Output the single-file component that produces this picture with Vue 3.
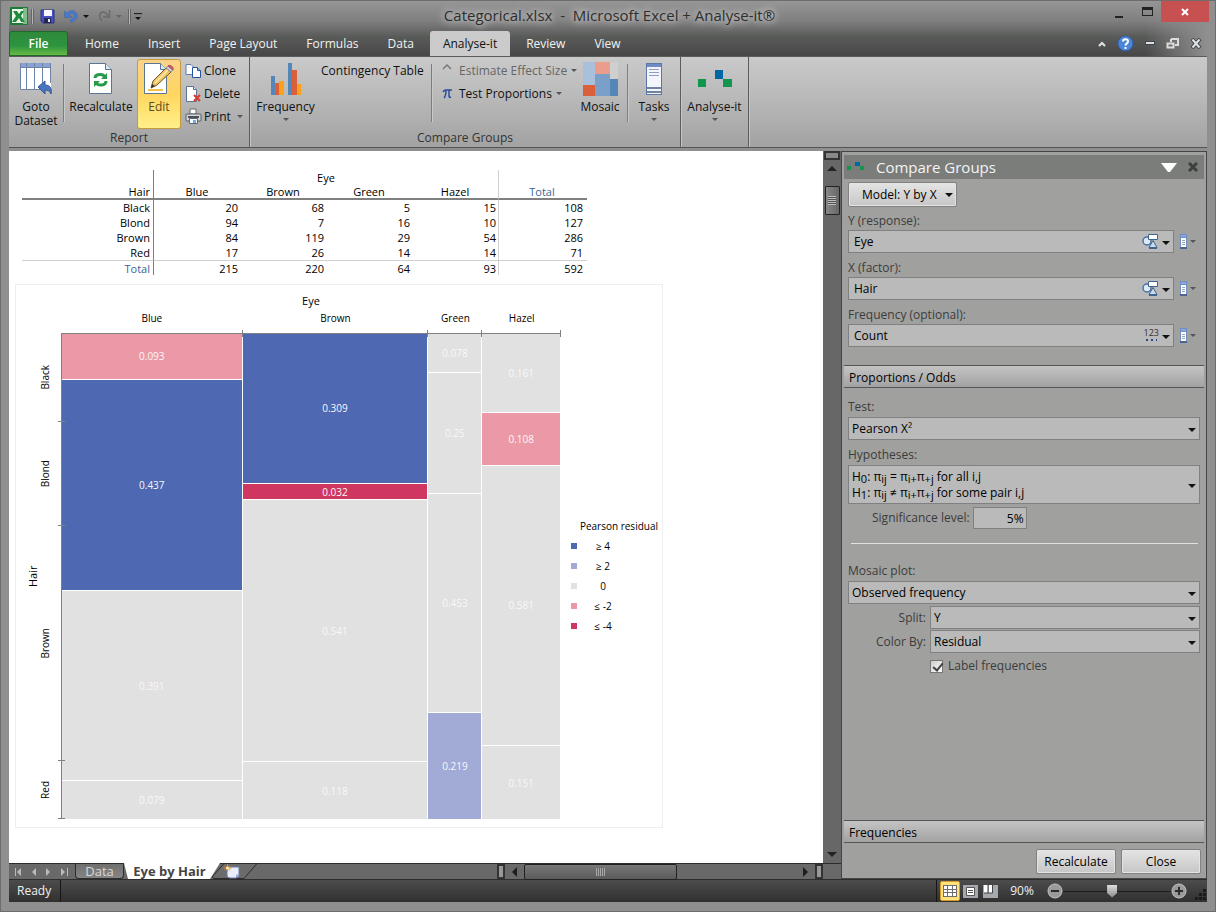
<script setup>
import { ref } from 'vue'

const tabs = ['Home', 'Insert', 'Page Layout', 'Formulas', 'Data', 'Analyse-it', 'Review', 'View']
const activeTab = ref('Analyse-it')

const eyes = ['Blue', 'Brown', 'Green', 'Hazel']
const eyeTotals = [215, 220, 64, 93]
const rows = [
  { hair: 'Black', counts: [20, 68, 5, 15], total: 108 },
  { hair: 'Blond', counts: [94, 7, 16, 10], total: 127 },
  { hair: 'Brown', counts: [84, 119, 29, 54], total: 286 },
  { hair: 'Red', counts: [17, 26, 14, 14], total: 71 },
]

const mosaic = [
  { eye: 'Blue', total: 215, cells: [['0.093', 'neg2'], ['0.437', 'pos4'], ['0.391', 'zero'], ['0.079', 'zero']] },
  { eye: 'Brown', total: 220, cells: [['0.309', 'pos4'], ['0.032', 'neg4'], ['0.541', 'zero'], ['0.118', 'zero']] },
  { eye: 'Green', total: 64, cells: [['0.078', 'zero'], ['0.25', 'zero'], ['0.453', 'zero'], ['0.219', 'pos2']] },
  { eye: 'Hazel', total: 93, cells: [['0.161', 'zero'], ['0.108', 'neg2'], ['0.581', 'zero'], ['0.151', 'zero']] },
]

const legend = [
  ['pos4', '≥ 4'],
  ['pos2', '≥ 2'],
  ['zero', '0'],
  ['neg2', '≤ -2'],
  ['neg4', '≤ -4'],
]

const variables = [
  { id: 'response', label: 'Y (response):', value: 'Eye', kind: 'category' },
  { id: 'factor', label: 'X (factor):', value: 'Hair', kind: 'category' },
  { id: 'frequency', label: 'Frequency (optional):', value: 'Count', kind: 'number' },
]

const significance = ref('5%')
const labelFrequencies = ref(true)
const zoom = ref(45)
</script>

<template>
  <div class="window">
    <header class="top">
      <div class="titlebar">
        <div class="quick">
          <svg class="app-icon" width="18" height="18" viewBox="0 0 18 18">
            <rect x="0" y="0" width="18" height="18" rx="1" fill="#1f7a38" />
            <path d="M2 2h12l2 2v12H2z" fill="#eef7ee" />
            <path d="M13 1h4v16h-4z" fill="#7fc08a" />
            <path d="M3 4h4l2 3 2-3h3l-3 5 4 6h-4l-2-4-3 4H2l4-6z" fill="#1f8a3c" />
          </svg>
          <span class="qsep"></span>
          <button aria-label="Save">
            <svg width="15" height="15" viewBox="0 0 15 15">
              <path d="M1 1h13v13H3l-2-2z" fill="#4a4fc0" stroke="#2c2f86" />
              <rect x="4" y="1" width="8" height="6" fill="#f4f6fb" />
              <rect x="4" y="9" width="7" height="5" fill="#23264f" />
              <rect x="8" y="10" width="2" height="3" fill="#e6e8f5" />
            </svg>
          </button>
          <button class="undo" aria-label="Undo">
            <svg width="14" height="14" viewBox="0 0 14 14">
              <path d="M0 2l1 7 7-1-2.500-2C7 3.500 10 4 10 6.500S8 10 6 11l1 2.500C11 12 14 9.500 13 5.500S7 0 3 4z" fill="#4a7bcb" stroke="#3560a8" stroke-width=".500" />
            </svg>
            <i class="caret"></i>
          </button>
          <button class="redo" aria-label="Redo">
            <svg width="14" height="14" viewBox="0 0 14 14">
              <path d="M12.500 1v7H6M11 7C9 2 4 2 3 5s0 5 2 7" fill="none" stroke="#6a6a6a" stroke-width="1.500" />
            </svg>
            <i class="caret dim"></i>
          </button>
          <span class="qsep"></span>
          <button class="custom" aria-label="Customize toolbar"><span></span><i class="caret"></i></button>
        </div>
        <h1>Categorical.xlsx &nbsp;-&nbsp; Microsoft Excel + Analyse-it®</h1>
        <div class="wincontrols">
          <button aria-label="Minimize"><svg width="8" height="14"><rect y="11" width="8" height="2" fill="#222" /></svg></button>
          <button aria-label="Maximize"><svg width="11" height="10"><path d="M0 0h11v9H0zM1 3v5h9V3z" fill="#222" fill-rule="evenodd" /></svg></button>
          <button class="close" aria-label="Close window"><svg width="8" height="8" viewBox="0 0 8 8"><path d="M1 1l6 6M7 1l-6 6" stroke="#fff" stroke-width="2" /></svg></button>
        </div>
      </div>
      <nav class="tabs">
        <button class="file">File</button>
        <button v-for="t in tabs" :key="t" :class="{ active: t === activeTab }" @click="activeTab = t">{{ t }}</button>
        <div class="doc-controls">
          <button aria-label="Collapse ribbon"><svg width="8" height="6"><path d="M1 5l3-3 3 3" fill="none" stroke="#e4e4e4" stroke-width="2" /></svg></button>
          <button aria-label="Help">
            <svg width="17" height="17" viewBox="0 0 17 17">
              <circle cx="8.500" cy="8.500" r="7.500" fill="#4d86d6" stroke="#2f5fae" />
              <path d="M6 6.500C6 3.500 11 3.500 11 6.500 11 8.500 8.500 8.500 8.500 10.500M8.500 12v2" fill="none" stroke="#fff" stroke-width="2" />
            </svg>
          </button>
          <button aria-label="Minimize workbook"><svg width="10" height="5"><rect x=".500" y=".500" width="9" height="3" fill="#e0e0e0" stroke="#3d4650" /></svg></button>
          <button aria-label="Restore workbook"><svg width="13" height="12" viewBox="0 0 13 12"><path d="M5 1h7v6H9M5 1v3" fill="none" stroke="#ddd" stroke-width="2" /><path d="M1.500 5.500h6v4h-6z" fill="none" stroke="#ddd" stroke-width="2" /></svg></button>
          <button aria-label="Close workbook"><svg width="12" height="11" viewBox="0 0 12 11"><path d="M2 1l8 9M10 1L2 10" stroke="#39424c" stroke-width="4" /><path d="M2.500 1.500l7 8M9.500 1.500l-7 8" stroke="#e4e4e4" stroke-width="2" /></svg></button>
        </div>
      </nav>
    </header>

    <section class="ribbon">
      <div class="group report">
        <div class="group-body">
          <button class="big goto">
            <svg width="32" height="32" viewBox="0 0 32 32">
              <path d="M0 0h31v27H0z" fill="#fff" />
              <path d="M0 0h31v5H0z" fill="#88a2d6" />
              <path d="M.500 0v26.500H20M6.500 0v26M14.500 0v26M22.500 0v20M30.500 0v20M0 4.500h31" fill="none" stroke="#6f83a8" />
              <path d="M18 24l7-6v4c5 0 7 3 6 9-1-3-3-4-6-4v4z" fill="#4875bd" stroke="#34589a" />
            </svg>
            <span>Goto<br />Dataset</span>
          </button>
          <span class="vsep"></span>
          <button class="big recalc">
            <svg width="24" height="32" viewBox="0 0 24 32">
              <path d="M.500.500h16l6 6v24H.500z" fill="#fff" stroke="#5c7597" />
              <path d="M16.500.500v6h6" fill="#dce6f5" stroke="#5c7597" />
              <path d="M6 15c0-4 8-5 10-1M17 18c0 5-8 5-10 2" fill="none" stroke="#279a49" stroke-width="3" />
              <path d="M12 16h6v-6zM11 18H5v6z" fill="#279a49" />
            </svg>
            <span>Recalculate</span>
          </button>
          <button class="big edit" aria-pressed="true">
            <svg width="32" height="32" viewBox="0 0 32 32">
              <path d="M1.500.500h16l6 6v24h-22z" fill="#fff" stroke="#5c7597" />
              <path d="M17.500.500v6h6" fill="#dce6f5" stroke="#5c7597" />
              <path d="M5 27h15" stroke="#f0c14b" stroke-width="2" />
              <path d="M8 25l2-7L23 5l5 4-14 13z" fill="#f3c462" stroke="#6d5526" />
              <path d="M12 20L25 7" stroke="#fff0b8" stroke-width="1.500" />
              <path d="M8 25l1-4 3 2z" fill="#333" />
              <path d="M23 5l2-2 5 4-2 2z" fill="#cfd4dc" stroke="#8b8f96" />
              <path d="M25 3c2-2 6 1 5 4z" fill="#cf5f6c" stroke="#b04a55" />
            </svg>
            <span>Edit</span>
          </button>
          <div class="stack">
            <button>
              <svg width="17" height="16" viewBox="0 0 17 16"><path d="M1 1.500h5l3 3v7H1z" fill="#fff" stroke="#5f7db0" /><path d="M7.500 4.500h5l3 3v7h-8z" fill="#fff" stroke="#2753a5" /><path d="M12.500 4.500v3h3" fill="#9db9e4" stroke="#2753a5" /></svg>
              Clone
            </button>
            <button>
              <svg width="17" height="16" viewBox="0 0 17 16"><path d="M1.500.500h7l3 3v12h-10z" fill="#fff" stroke="#5c7597" /><path d="M8.500.500v3h3" fill="#dce6f5" stroke="#5c7597" /><path d="M9 9l6 6M15 9l-6 6" stroke="#d9372b" stroke-width="2" /></svg>
              Delete
            </button>
            <button>
              <svg width="17" height="17" viewBox="0 0 17 17"><path d="M5 1h6v5H5z" fill="#fff" stroke="#666b75" /><rect x="1" y="6" width="15" height="7" rx="1" fill="#d3d6dc" stroke="#565a63" /><path d="M3 9h11" stroke="#4d5059" stroke-width="2" /><path d="M4.500 10.500h8v5h-8z" fill="#f7f9fc" stroke="#5e6675" /><path d="M8 12h3v3H8z" fill="#6faae0" /></svg>
              Print <i class="caret small dimmed"></i>
            </button>
          </div>
        </div>
        <div class="group-label">Report</div>
      </div>

      <div class="group compare">
        <div class="group-body">
          <button class="big freq">
            <svg width="32" height="32"><path d="M1 13h4v19H1zM18 0h4v32h-4z" fill="#5586b8" /><path d="M5 20h4v12H5zM22 7h5v25h-5z" fill="#d9603b" /><path d="M9 18h5v14H9zM27 21h4v11h-4z" fill="#fba01c" /></svg>
            <span>Frequency</span><i class="caret small dimmed"></i>
          </button>
          <div class="stack ct"><button>Contingency Table</button></div>
          <span class="vsep"></span>
          <div class="stack effects">
            <button class="disabled" disabled>
              <svg width="11" height="16"><path d="M1 6l4-4 4 4" fill="none" stroke="#777" stroke-width="1.500" /></svg>
              Estimate Effect Size <i class="caret small dimmed"></i>
            </button>
            <button>
              <svg width="11" height="12" viewBox="0 0 11 12"><path d="M1 4q1-2 3-2h6M4 2c0 4 0 6-2 8M7 2v6q0 2 2 1" fill="none" stroke="#2c4da0" stroke-width="1.500" /></svg>
              Test Proportions <i class="caret small dimmed"></i>
            </button>
          </div>
          <button class="big mosaic-btn">
            <svg width="35" height="34"><path d="M0 0h12v23H0z" fill="#a9c0dc" /><path d="M12 0h15v12H12z" fill="#e99d8a" /><path d="M27 0h8v17h-8z" fill="#cfcfcf" /><path d="M0 23h12v11H0z" fill="#d9603b" /><path d="M12 12h15v22H12z" fill="#7a9fc8" /><path d="M27 17h8v17h-8z" fill="#5586b8" /></svg>
            <span>Mosaic</span>
          </button>
          <span class="vsep"></span>
          <button class="big tasks">
            <svg width="16" height="32" viewBox="0 0 16 32"><rect x=".500" y=".500" width="15" height="31" fill="#f2f5fb" stroke="#5d76a6" /><path d="M1 1h14v3H1z" fill="#6f8cc9" /><path d="M3 6.500h10M3 9.500h10M3 12.500h10" stroke="#8f9cc7" /><path d="M1 25h14M1 29h14" stroke="#72839f" stroke-width="2" /></svg>
            <span>Tasks</span><i class="caret small dimmed"></i>
          </button>
        </div>
        <div class="group-label">Compare Groups</div>
      </div>

      <div class="group about">
        <div class="group-body">
          <button class="big">
            <svg width="34" height="32"><path d="M0 16h8v8H0zM25 16h9v8h-9z" fill="#12954d" /><path d="M17 7h8v9h-8z" fill="#0067a6" /></svg>
            <span>Analyse-it</span><i class="caret small dimmed"></i>
          </button>
        </div>
      </div>
    </section>

    <main class="main">
      <div class="workbook">
        <div class="view">
          <section class="sheet">
            <table>
              <colgroup>
                <col class="c-head" />
                <col v-for="e in eyes" :key="e" class="c-eye" />
                <col />
              </colgroup>
              <thead>
                <tr><td class="rowhead"></td><th colspan="4">Eye</th><td class="total"></td></tr>
                <tr class="cols">
                  <th class="rowhead">Hair</th>
                  <th v-for="e in eyes" :key="e">{{ e }}</th>
                  <th class="total blue">Total</th>
                </tr>
              </thead>
              <tbody>
                <tr v-for="r in rows" :key="r.hair">
                  <th class="rowhead">{{ r.hair }}</th>
                  <td v-for="(c, i) in r.counts" :key="i">{{ c }}</td>
                  <td class="total">{{ r.total }}</td>
                </tr>
                <tr class="sum">
                  <th class="rowhead blue">Total</th>
                  <td v-for="(c, i) in eyeTotals" :key="i">{{ c }}</td>
                  <td class="total">592</td>
                </tr>
              </tbody>
            </table>

            <figure class="chart">
              <div class="ylabels">
                <span class="axis-title vertical">Hair</span>
                <div class="hairs">
                  <div v-for="r in rows" :key="r.hair" class="hair" :style="{ flexGrow: r.total }"><span class="vertical">{{ r.hair }}</span></div>
                </div>
              </div>
              <div class="plot">
                <div class="axis-title">Eye</div>
                <div class="columns">
                  <div v-for="col in mosaic" :key="col.eye" class="column" :style="{ flexGrow: col.total }">
                    <div class="col-label">{{ col.eye }}</div>
                    <div class="cells">
                      <div v-for="(cell, i) in col.cells" :key="i" class="cell" :class="cell[1]" :style="{ flexGrow: cell[0] * 1000 }">{{ cell[0] }}</div>
                    </div>
                  </div>
                </div>
              </div>
              <div class="legend">
                <div class="legend-title">Pearson residual</div>
                <div v-for="l in legend" :key="l[0]" class="legend-row"><i :class="l[0]"></i><span>{{ l[1] }}</span></div>
              </div>
            </figure>
          </section>
          <div class="vscroll">
            <div class="split"></div>
            <button class="arrow up" aria-label="Scroll up"></button>
            <div class="thumb"><i></i></div>
            <button class="arrow down" aria-label="Scroll down"></button>
          </div>
        </div>
        <div class="bottombar">
          <div class="sheetnav">
            <button aria-label="First sheet"><svg width="7" height="8"><path d="M0 0h1v8H0zM6 0v8L2 4z" fill="#bbb" /></svg></button>
            <button aria-label="Previous sheet"><svg width="5" height="8"><path d="M4 0v8L0 4z" fill="#bbb" /></svg></button>
            <button aria-label="Next sheet"><svg width="5" height="8"><path d="M0 0v8l4-4z" fill="#bbb" /></svg></button>
            <button aria-label="Last sheet"><svg width="7" height="8"><path d="M6 0h1v8H6zM0 0v8l4-4z" fill="#bbb" /></svg></button>
          </div>
          <button class="sheet-tab">Data</button>
          <button class="sheet-tab current">Eye by Hair</button>
          <button class="new-sheet" aria-label="Insert worksheet">
            <svg width="46" height="16" viewBox="0 0 46 16">
              <path d="M0 14L12 .500h33L32 15.500H2z" fill="#6a6b6a" stroke="#2c2c2c" />
              <path d="M15 4h12v9l-3 2h-6q-3 0-3-3z" fill="#e9eefa" stroke="#6b7fa8" />
              <path d="M24 15l3-4-3 1z" fill="#8da4d0" />
              <path d="M15.500 1v8M11.500 5h8M13 2.500l5 5M18 2.500l-5 5" stroke="#e88b1e" />
              <circle cx="15.500" cy="5" r="1.500" fill="#ffe9a8" />
            </svg>
          </button>
          <div class="hscroll">
            <span class="hsplit"></span>
            <button class="harrow left" aria-label="Scroll left"></button>
            <div class="htrack"><div class="hthumb"><i></i></div></div>
            <button class="harrow right" aria-label="Scroll right"></button>
            <span class="hsplit"></span>
          </div>
          <div class="corner"></div>
        </div>
      </div>

      <aside class="pane">
        <div class="pane-title">
          <svg width="18" height="10"><path d="M0 4h4v4H0zM13 4h4v4h-4z" fill="#12954d" /><path d="M8 0h5v4H8z" fill="#0067a6" /></svg>
          <h2>Compare Groups</h2>
          <button aria-label="Pane options"><svg width="16" height="9"><path d="M0 0h16l-7 9H7z" fill="#fff" /></svg></button>
          <button aria-label="Close pane"><svg width="10" height="10"><path d="M1 1l8 8M9 1l-8 8" stroke="#3f3f3f" stroke-width="3" /></svg></button>
        </div>
        <form class="pane-body" @submit.prevent>
          <button type="button" class="btn model">Model: Y by X <i class="caret"></i></button>

          <div v-for="v in variables" :key="v.id" class="variable">
            <label :for="v.id">{{ v.label }}</label>
            <div class="variable-row">
              <div class="field pick">
                <select :id="v.id"><option>{{ v.value }}</option></select>
                <svg v-if="v.kind === 'category'" class="kind" width="17" height="15" viewBox="0 0 17 15">
                  <circle cx="5" cy="7" r="4" fill="#dfe9f4" stroke="#4a6f9f" stroke-width="1.500" />
                  <path d="M6.500.500h9v5h-9z" fill="#fff" stroke="#3e648f" />
                  <path d="M11 6.500L7 13.500h8z" fill="#c8dcef" stroke="#3e648f" />
                  <path d="M7 14.500h8" stroke="#3e648f" />
                </svg>
                <span v-else class="kind num">123<i></i></span>
                <i class="caret"></i>
              </div>
              <button type="button" class="dataset" :aria-label="'Dataset for ' + v.value">
                <svg width="7" height="15" viewBox="0 0 7 15"><path d="M0 0h7v15H0z" fill="#6f8fc4" /><path d="M0 13h7v2H0z" fill="#4a6690" /><path d="M1 4h5v9H1z" fill="#fff" /><path d="M2 6.500h3M2 8.500h3M2 10.500h3" stroke="#9aa3b3" /><path d="M1 1h5v2H1z" fill="#8ba6df" /></svg>
                <i class="caret small dimmed"></i>
              </button>
            </div>
          </div>
        </form>

        <h3 class="section-head">Proportions / Odds</h3>

        <form class="pane-body options" @submit.prevent>
          <label for="test">Test:</label>
          <div class="field"><select id="test"><option>Pearson X²</option></select><i class="caret"></i></div>
          <span id="hyp" class="lab">Hypotheses:</span>
          <button type="button" class="field hypotheses" aria-haspopup="listbox" aria-labelledby="hyp">
            <span>H<sub>0</sub>: π<sub>ij</sub> = π<sub>i+</sub>π<sub>+j</sub> for all i,j</span>
            <span>H<sub>1</sub>: π<sub>ij</sub> ≠ π<sub>i+</sub>π<sub>+j</sub> for some pair i,j</span>
            <i class="caret"></i>
          </button>
          <div class="sig">
            <label for="sig">Significance level:</label>
            <input id="sig" v-model="significance" type="text" />
          </div>
          <hr />
          <label for="plot">Mosaic plot:</label>
          <div class="field"><select id="plot"><option>Observed frequency</option></select><i class="caret"></i></div>
          <div class="pair">
            <label for="split">Split:</label>
            <div class="field"><select id="split"><option>Y</option></select><i class="caret"></i></div>
            <label for="color">Color By:</label>
            <div class="field"><select id="color"><option>Residual</option></select><i class="caret"></i></div>
            <label class="check"><input v-model="labelFrequencies" type="checkbox" />Label frequencies</label>
          </div>
        </form>

        <h3 class="section-head bottom">Frequencies</h3>
        <div class="actions">
          <button class="btn">Recalculate</button>
          <button class="btn">Close</button>
        </div>
      </aside>
    </main>

    <footer class="status">
      <span class="ready">Ready</span>
      <div class="status-right">
        <button class="view-btn on" aria-label="Normal view"><svg width="14" height="12"><path d="M0 0h14v12H0z" fill="#6e6e6e" /><path d="M1 1h3v3H1zM5 1h4v3H5zM10 1h3v3h-3zM1 5h3v2H1zM5 5h4v2H5zM10 5h3v2h-3zM1 8h3v3H1zM5 8h4v3H5zM10 8h3v3h-3z" fill="#fff" /></svg></button>
        <button class="view-btn" aria-label="Page layout view"><svg width="15" height="13"><path d="M0 0h15v13H0z" fill="#a5a8ad" /><path d="M3.500 2.500h8v8h-8z" fill="#fff" stroke="#555" /><path d="M5 5.500h5M5 7.500h5" stroke="#555" /></svg></button>
        <button class="view-btn" aria-label="Page break view"><svg width="15" height="13"><path d="M0 0h15v13H0z" fill="#a5a8ad" /><path d="M1 0h4v8H1zM6 0h3v8H6z" fill="#fff" /><path d="M5 0v8M9.500 0v8H1" fill="none" stroke="#444" /></svg></button>
        <span class="percent">90%</span>
        <button class="round" aria-label="Zoom out"><svg width="16" height="16"><circle cx="8" cy="8" r="7" fill="#9a9a9a" stroke="#c4c4c4" /><path d="M4 8h8" stroke="#2b2b2b" stroke-width="2" /></svg></button>
        <input v-model="zoom" type="range" min="0" max="100" aria-label="Zoom" />
        <button class="round" aria-label="Zoom in"><svg width="16" height="16"><circle cx="8" cy="8" r="7" fill="#9a9a9a" stroke="#c4c4c4" /><path d="M4 8h8M8 4v8" stroke="#2b2b2b" stroke-width="2" /></svg></button>
        <svg class="grip" width="11" height="12"><path d="M8 0h3v3H8zM4 4h3v3H4zM8 4h3v3H8zM0 8h3v3H0zM4 8h3v3H4zM8 8h3v3H8z" fill="#1c1c1c" /></svg>
      </div>
    </footer>
  </div>
</template>

<style>
body { background: #8f8f8f; }
</style>

<style scoped>
.window, .window * { box-sizing: border-box; }
.window {
  min-height: 100vh;
  display: flex;
  flex-direction: column;
  padding: 0 8px 9px;
  border: 1px solid #6d6d6d;
  background: #8f8f8f;
  font-family: "Open Sans", "Noto Sans", sans-serif;
  font-size: 12px;
  line-height: 14px;
  color: #111;
}
button { font: inherit; color: inherit; background: none; border: 0; padding: 0; margin: 0; }
h1, h2, h3, figure { margin: 0; font-weight: 400; }
svg { display: block; flex: none; }
.caret { display: block; flex: none; width: 0; height: 0; border: 3px solid transparent; border-top-color: #111; border-bottom: 0; }
.caret.dim { border-top-color: #666; }
.caret.small.dimmed { border-top-color: #555; }

/* title and tabs */
.top {
  margin: 0 -8px;
  padding: 0 8px;
  background:
    linear-gradient(90deg, #8f8f8f 0, #8f8f8f 8px, transparent 8px),
    linear-gradient(270deg, #8f8f8f 0, #8f8f8f 8px, transparent 70px),
    linear-gradient(#969696 0, #7f7f7f 20px, #585a58 36px, #464646 56px);
}
.titlebar { display: flex; height: 30px; }
.quick { flex: 1; display: flex; align-items: center; gap: 6px; padding: 0 0 0 1px; }
.quick button { display: flex; align-items: center; gap: 5px; }
.app-icon { margin-right: -3px; }
.quick .undo { margin-left: 3px; }
.quick .redo { margin-left: 2px; }
.qsep { width: 3px; height: 15px; background: #b5b5b5; border: 1px solid #666; border-width: 0 1px; }
.quick .custom { flex-direction: column; gap: 2px; margin-left: -3px; }
.custom span { width: 8px; height: 2px; background: #222; border-bottom: 1px solid #777; }
h1 { padding-top: 4px; font-size: 15px; line-height: 20px; color: #2e2e2e; text-shadow: 0 0 6px #c8c8c8, 0 0 8px #c0c0c0, 0 0 10px #bbb; white-space: nowrap; }
.wincontrols { flex: 1; display: flex; justify-content: flex-end; align-items: flex-start; margin-right: -2px; }
.wincontrols button { width: 28px; height: 21px; display: flex; align-items: center; justify-content: center; }
.wincontrols .close { width: 48px; background: #c75050; }
.tabs { display: flex; gap: 3px; height: 25px; }
.tabs > button { padding: 0 13px; height: 25px; color: #f2f2f2; border-radius: 3px 3px 0 0; white-space: nowrap; }
.tabs > .file { width: 59px; margin-right: 1px; border: 1px solid #1f6a2c; background: linear-gradient(#2f8a3b, #2c9440 60%, #69b945); color: #fff; font-weight: 600; }
.tabs > .active { background: #cbcbcb; color: #111; }
.doc-controls { margin-left: auto; display: flex; align-items: center; gap: 11px; padding-right: 5px; }

/* ribbon */
.ribbon { display: flex; height: 92px; background: linear-gradient(#cacaca, #b9b9b9 45%, #a2a2a2); border-top: 1px solid #5b5b5b; border-bottom: 1px solid #555; }
.group { display: flex; flex-direction: column; border-right: 1px solid #5c5c5c; box-shadow: 1px 0 #c6c6c6; }
.report { width: 241px; }
.compare { width: 431px; }
.about { width: 68px; }
.group-body { display: flex; flex: 1; padding-top: 2px; }
.group-label { height: 16px; text-align: center; color: #333; }
.big { display: flex; flex-direction: column; align-items: center; height: 70px; padding-top: 4px; line-height: 14px; white-space: nowrap; }
.big span { margin-top: 5px; }
.big .caret { margin-top: 4px; }
.goto { width: 54px; }
.vsep { width: 2px; height: 58px; margin-top: 5px; background: #7d7d7d; border-right: 1px solid #c9c9c9; }
.recalc { width: 72px; }
.edit { width: 44px; border: 1px solid #c79a3b; border-radius: 3px; background: linear-gradient(#fbd38a, #ffd65f 50%, #fff08a); color: #5c4a1c; padding-top: 3px; }
.stack { display: flex; flex-direction: column; padding-left: 4px; }
.stack button { display: flex; align-items: center; height: 23px; gap: 2px; white-space: nowrap; }
.stack .caret { margin-left: 4px; }
.freq { width: 71px; }
.ct { width: 110px; padding-left: 0; }
.effects { width: 140px; padding-left: 9px; }
.effects button { gap: 6px; }
.effects .caret { margin-left: -2px; }
.disabled { color: #666; }
.mosaic-btn { width: 54px; padding-top: 3px; }
.mosaic-btn span { margin-top: 4px; }
.tasks { width: 50px; }
.about .big { width: 67px; }

/* workbook */
.main { flex: 1; display: flex; margin-top: 3px; border-bottom: 1px solid #2d2d2d; }
.workbook { flex: 1; min-width: 0; display: flex; flex-direction: column; }
.view { flex: 1; display: flex; }
.sheet { flex: 1; background: #fff; padding: 19px 6px 20px; display: flex; flex-direction: column; }
table { border-spacing: 0; table-layout: fixed; width: 565px; margin-left: 7px; font-size: 11px; line-height: 13px; color: #000; }
th, td { height: 15px; padding: 0 2px; font-weight: 400; text-align: right; }
.c-head { width: 132px; }
.c-eye { width: 86px; }
thead th { text-align: center; }
.rowhead, thead .rowhead { text-align: right; padding-right: 3px; border-right: 1px solid #7d7d7d; }
.total { border-left: 1px solid #d0d0d0; padding-right: 4px; }
.cols > th { border-bottom: 2px solid #808080; }
.sum > * { border-top: 1px solid #d0d0d0; }
.blue { color: #3b6596; }
.chart { display: flex; width: 648px; height: 544px; margin-top: 9px; border: 1px solid #eee; font-size: 10px; line-height: 14px; color: #000; }
.ylabels { display: flex; align-items: stretch; width: 45px; padding: 48px 0 8px 10px; }
.vertical { writing-mode: vertical-rl; transform: rotate(180deg); text-align: center; }
.axis-title { font-size: 11px; text-align: center; }
.hairs { display: flex; flex-direction: column; }
.hair { flex: 1 1 0; display: flex; align-items: center; justify-content: center; position: relative; width: 10px; }
.hair::after { content: ""; position: absolute; left: 18px; bottom: 0; width: 7px; height: 1px; background: #808080; z-index: 1; }
.plot { width: 500px; display: flex; flex-direction: column; padding: 9px 0 8px; }
.columns { flex: 1; display: flex; }
.column { flex: 1 1 0; min-width: 0; display: flex; flex-direction: column; position: relative; }
.column::after { content: ""; position: absolute; right: 0; top: 22px; width: 1px; height: 7px; background: #808080; }
.col-label { height: 25px; padding-top: 3px; text-align: center; }
.cells { flex: 1; display: flex; flex-direction: column; gap: 1px; border-top: 1px solid #808080; border-right: 1px solid #fff; }
.column:first-child .cells { border-left: 1px solid #808080; }
.cell { flex: 1 1 0; min-height: 0; display: flex; align-items: center; justify-content: center; color: #f8f8f8; line-height: 12px; }
.pos4 { background: #4e68b1; }
.pos2 { background: #a2aad6; }
.zero { background: #e1e1e1; }
.neg2 { background: #ec99a7; }
.neg4 { background: #cf3760; }
.legend { flex: 1; padding: 42px 0 0 10px; display: flex; flex-direction: column; justify-content: center; }
.legend-title { text-align: right; padding-right: 4px; height: 17px; white-space: nowrap; }
.legend-row { display: flex; align-items: center; height: 20px; }
.legend-row i { width: 6px; height: 6px; }
.legend-row span { width: 52px; text-align: center; }

/* scroll bars */
.vscroll { width: 18px; display: flex; flex-direction: column; align-items: center; background: #666766; }
.split { width: 16px; height: 9px; border: 2px solid #333; background: #888; }
.arrow { width: 16px; height: 17px; display: flex; align-items: center; justify-content: center; }
.arrow::before { content: ""; border: 5px solid transparent; border-top: 0; border-bottom-color: #222; }
.arrow.down { margin-top: auto; }
.arrow.down::before { border-top: 5px solid #222; border-bottom: 0; }
.thumb { width: 15px; height: 29px; margin-top: 9px; border: 1px solid #222; border-radius: 1px; background: linear-gradient(90deg, #888, #666); display: flex; align-items: center; justify-content: center; }
.thumb i { width: 8px; height: 9px; background: repeating-linear-gradient(#bbb 0 1px, #555 1px 2px); }
.bottombar { display: flex; height: 16px; background: #686968; border-top: 1px solid #2c2c2c; }
.sheetnav { width: 66px; display: flex; align-items: center; justify-content: space-between; padding: 0 7px 0 6px; }
.sheet-tab { width: 49px; font-size: 13px; color: #d8d8d8; border: 1px solid #2d2d2d; border-top: 0; border-radius: 0 0 4px 4px; background: linear-gradient(#6f6f6f, #858585); }
.sheet-tab.current { width: 96px; margin-top: -1px; padding-right: 5px; border: 0; border-radius: 0; background: #fff; color: #444; font-weight: 700; clip-path: polygon(0 0, 100% 0, 86px 100%, 4px 100%); white-space: nowrap; }
.new-sheet { margin: -1px 0 0 -8px; height: 16px; }
.hscroll { margin-left: auto; width: 326px; display: flex; align-items: center; }
.hsplit { width: 8px; height: 15px; border: 2px solid #333; background: #999; }
.harrow { width: 19px; height: 15px; display: flex; align-items: center; justify-content: center; }
.harrow::before { content: ""; border: 5px solid transparent; }
.left::before { border-left: 0; border-right-color: #1f1f1f; }
.right::before { border-right: 0; border-left-color: #1f1f1f; }
.htrack { flex: 1; }
.hthumb { width: 153px; height: 16px; border: 1px solid #222; border-radius: 2px; background: linear-gradient(#777, #5b5b5b); display: flex; align-items: center; justify-content: center; }
.hthumb i { width: 9px; height: 8px; background: repeating-linear-gradient(90deg, #aaa 0 1px, #666 1px 2px); }
.corner { width: 18px; }

/* task pane */
.pane { width: 366px; padding: 3px 2px 0; border: 1px solid #454545; background: #a0a09e; display: flex; flex-direction: column; color: #000; }
.pane-title { display: flex; align-items: center; gap: 11px; height: 24px; padding: 0 6px 0 3px; background: #7b7d7b; }
h2 { flex: 1; font-size: 15px; line-height: 22px; color: #f4f4f4; }
.pane-body { display: flex; flex-direction: column; padding: 3px 4px 0; }
.pane-body label, .lab { color: #3c3c3c; }
.btn { height: 25px; border: 1px solid #818181; border-radius: 2px; background: linear-gradient(#e4e4e4, #c6c6c6); box-shadow: inset 0 0 0 1px #e4e4e4; }
.model { width: 109px; display: flex; align-items: center; justify-content: space-between; padding: 0 3px 0 13px; }
.model .caret, .field .caret { border-width: 4px 4px 0; }
.variable { height: 47px; padding-top: 7px; }
.variable label { display: block; height: 16px; }
.variable-row { display: flex; gap: 6px; }
.field { position: relative; display: block; flex: none; height: 23px; border: 1px solid #808080; background: #bababa; }
.field select { appearance: none; width: 100%; height: 100%; padding: 0 3px; border: 0; background: none; font: inherit; color: #000; }
.field > .caret { position: absolute; right: 3px; top: 50%; margin-top: -1px; }
.pick { width: 326px; }
.pick select { padding-left: 5px; }
.kind { position: absolute; right: 14px; top: 3px; pointer-events: none; }
.num { font-size: 9px; line-height: 10px; color: #333; }
.num i { display: block; height: 2px; margin: 1px 2px 0; background: repeating-linear-gradient(90deg, #2a4a78 0 2px, transparent 2px 5px); }
.dataset { display: flex; align-items: center; gap: 3px; }
.section-head { height: 23px; margin-top: 17px; padding: 4px 5px 0; font-size: 12px; line-height: 15px; border: 1px solid #555; border-width: 1px 0; background: linear-gradient(#c4c4c4, #a2a2a2); }
.options { padding-top: 12px; }
.options > label, .lab { height: 17px; }
.options > .field + .lab { margin-top: 8px; }
.hypotheses { height: 39px; padding: 0 3px; text-align: left; line-height: 16px; }
.hypotheses span { display: block; }
sub { font-size: 11px; line-height: 0; vertical-align: -2px; }
.sig { display: flex; align-items: center; gap: 3px; margin: 3px 0 0 24px; }
.sig input { width: 54px; height: 22px; padding: 0 2px; border: 1px solid #808080; background: #bababa; text-align: right; font: inherit; }
hr { width: calc(100% - 5px); height: 1px; margin: 14px 0 20px 3px; border: 0; background: #e2e2e2; flex: none; }
.pair { display: grid; grid-template-columns: 78px 1fr; column-gap: 4px; row-gap: 1px; margin-top: 2px; align-items: center; }
.pair > label { text-align: right; }
.pair .check { grid-column: 2; display: flex; align-items: center; gap: 5px; margin-top: 5px; }
.check input { appearance: none; width: 13px; height: 13px; margin: 0; border: 1px solid #777; background: #e6e6e6; }
.check input:checked { background: #e6e6e6 linear-gradient(135deg, #ccc, #fff); }
.check input:checked::after { content: ""; display: block; width: 4px; height: 8px; margin: 0 0 0 4px; border: solid #444; border-width: 0 2px 2px 0; transform: rotate(40deg); }
.section-head.bottom { margin-top: auto; }
.actions { display: flex; justify-content: flex-end; gap: 5px; padding: 6px 3px 4px; }
.actions .btn { width: 80px; }

/* status bar */
.status { display: flex; justify-content: space-between; height: 22px; background: linear-gradient(#4c4c4c, #303030); color: #f0f0f0; }
.ready { width: 52px; padding: 4px 0 0 8px; border-right: 1px solid #151515; }
.status-right { display: flex; align-items: center; border-left: 1px solid #151515; padding-left: 3px; }
.view-btn { width: 20px; height: 20px; display: flex; align-items: center; justify-content: center; }
.view-btn.on { border: 1px solid #d79a2c; border-radius: 2px; background: #ffe27a; }
.percent { width: 34px; margin: 0 8px 0 5px; text-align: center; }
input[type="range"] { appearance: none; width: 108px; height: 16px; margin: 0; background: linear-gradient(#1b1b1b, #1b1b1b) center / 100% 1px no-repeat; }
input[type="range"]::-webkit-slider-thumb { appearance: none; width: 10px; height: 13px; background: linear-gradient(#ddd, #888); clip-path: polygon(0 0, 100% 0, 100% 65%, 50% 100%, 0 65%); }
.grip { margin: 8px 1px 0 8px; }
</style>
